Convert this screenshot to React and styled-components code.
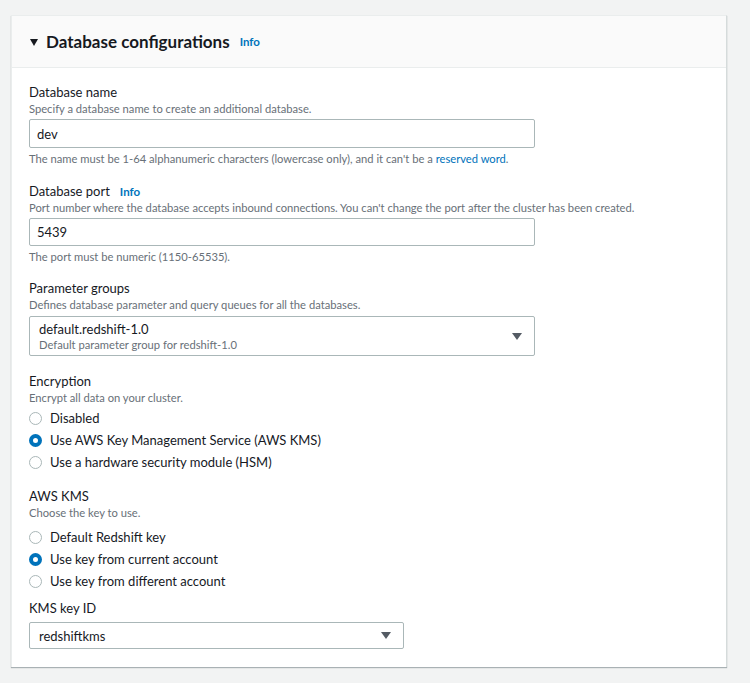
import React from "react";
import styled, { createGlobalStyle } from "styled-components";

const FONT = `Lato, "Open Sans", "Liberation Sans", sans-serif`;

const GlobalStyle = createGlobalStyle`
  html, body { margin: 0; padding: 0; background: #f2f3f3; }
  body { font-family: ${FONT}; color: #16191f; -webkit-font-smoothing: antialiased; }
  * { box-sizing: border-box; }
`;

const Page = styled.div`
  padding: 15px 23px 16px 11px;
  min-height: 683px;
`;

const Card = styled.section`
  background: #fff;
  border-left: 1px solid #eaeded;
  border-right: 1px solid #d5dbdb;
  border-top: 1px solid #eaeded;
  box-shadow: 0 1px 1px 0 rgba(0, 28, 36, 0.3);
`;

const Header = styled.header`
  display: flex;
  align-items: center;
  height: 52px;
  padding: 0 18px;
  background: #fafafa;
  border-bottom: 1px solid #eaeded;
`;

const Caret = styled.span`
  width: 0;
  height: 0;
  border-left: 4.5px solid transparent;
  border-right: 4.5px solid transparent;
  border-top: 7px solid #16191f;
  margin: 1px 8px 0 0;
`;

const Title = styled.h2`
  margin: 0 10px 0 0;
  font-size: 17px;
  font-weight: 700;
  color: #16191f;
  line-height: 22px;
`;

const InfoLink = styled.a`
  font-size: 11.5px;
  font-weight: 700;
  color: #0073bb;
  text-decoration: none;
  margin-left: ${(p) => p.$ml || 0}px;
  line-height: 16px;
  padding-top: 1px;
`;

const Body = styled.div`
  display: flex;
  flex-direction: column;
  padding: 15px 17px 18px;
`;

const Field = styled.div`
  display: flex;
  flex-direction: column;
  margin-top: ${(p) => p.$mt || 0}px;
`;

const Label = styled.div`
  display: flex;
  align-items: center;
  font-size: 13px;
  line-height: 18px;
  color: #16191f;
`;

const Desc = styled.div`
  font-size: 11.2px;
  line-height: 16px;
  color: #687078;
`;

const Constraint = styled(Desc)`
  margin-top: 3px;
  a {
    color: #0073bb;
    text-decoration: none;
  }
`;

const Input = styled.div`
  margin-top: ${(p) => p.$mt ?? 2}px;
  width: ${(p) => p.$w || 506}px;
  height: ${(p) => p.$h || 29}px;
  border: 1px solid #aab7b8;
  border-radius: 2px;
  padding: 0 ${(p) => p.$px ?? 7}px;
  display: flex;
  align-items: center;
  justify-content: space-between;
  font-size: 13px;
  color: #16191f;
  background: #fff;
`;

const SelectText = styled.div`
  display: flex;
  flex-direction: column;
`;

const OptionMain = styled.span`
  font-size: 13px;
  line-height: 18px;
`;

const OptionSub = styled.span`
  font-size: 11.2px;
  line-height: 14px;
  color: #687078;
`;

const Arrow = styled.span`
  width: 0;
  height: 0;
  border-left: 5px solid transparent;
  border-right: 5px solid transparent;
  border-top: 7px solid #545b64;
  margin-right: ${(p) => p.$mr || 0}px;
`;

const RadioGroup = styled.div`
  display: flex;
  flex-direction: column;
  margin-top: ${(p) => p.$mt || 0}px;
`;

const RadioRow = styled.label`
  display: flex;
  align-items: center;
  gap: 8px;
  height: 22px;
  font-size: 13px;
  color: #16191f;
`;

const RadioCircle = styled.span`
  width: 13px;
  height: 13px;
  border-radius: 50%;
  flex: none;
  background: #fff;
  border: ${(p) => (p.$checked ? "4px solid #0073bb" : "1px solid #aab7b8")};
`;

function Radio({ checked, children }) {
  return (
    <RadioRow>
      <RadioCircle $checked={checked} />
      {children}
    </RadioRow>
  );
}

export default function App() {
  return (
    <>
      <GlobalStyle />
      <Page>
        <Card>
          <Header>
            <Caret />
            <Title>Database configurations</Title>
            <InfoLink href="#">Info</InfoLink>
          </Header>
          <Body>
            <Field>
              <Label>Database name</Label>
              <Desc>Specify a database name to create an additional database.</Desc>
              <Input>dev</Input>
              <Constraint>
                The name must be 1-64 alphanumeric characters (lowercase only), and it can't be a{" "}
                <a href="#">reserved word</a>.
              </Constraint>
            </Field>
            <Field $mt={15}>
              <Label>
                Database port <InfoLink href="#" $ml={10}>Info</InfoLink>
              </Label>
              <Desc>
                Port number where the database accepts inbound connections. You can't change the port after the cluster has been created.
              </Desc>
              <Input $h={28}>5439</Input>
              <Constraint>The port must be numeric (1150-65535).</Constraint>
            </Field>
            <Field $mt={14}>
              <Label>Parameter groups</Label>
              <Desc>Defines database parameter and query queues for all the databases.</Desc>
              <Input $mt={3} $h={40} $px={9}>
                <SelectText>
                  <OptionMain>default.redshift-1.0</OptionMain>
                  <OptionSub>Default parameter group for redshift-1.0</OptionSub>
                </SelectText>
                <Arrow $mr={3} />
              </Input>
            </Field>
            <Field $mt={16}>
              <Label>Encryption</Label>
              <Desc>Encrypt all data on your cluster.</Desc>
              <RadioGroup $mt={1}>
                <Radio>Disabled</Radio>
                <Radio checked>Use AWS Key Management Service (AWS KMS)</Radio>
                <Radio>Use a hardware security module (HSM)</Radio>
              </RadioGroup>
            </Field>
            <Field $mt={14}>
              <Label>AWS KMS</Label>
              <Desc>Choose the key to use.</Desc>
              <RadioGroup $mt={5}>
                <Radio>Default Redshift key</Radio>
                <Radio checked>Use key from current account</Radio>
                <Radio>Use key from different account</Radio>
              </RadioGroup>
            </Field>
            <Field $mt={7}>
              <Label>KMS key ID</Label>
              <Input $mt={5} $w={375} $h={27} $px={9}>
                redshiftkms
                <Arrow $mr={3} />
              </Input>
            </Field>
          </Body>
        </Card>
      </Page>
    </>
  );
}
